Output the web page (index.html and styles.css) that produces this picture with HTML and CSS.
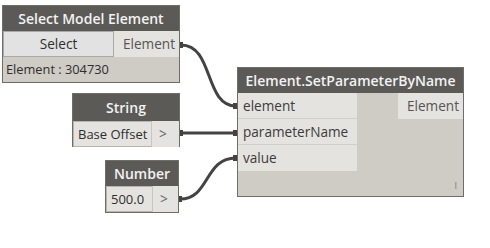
FILE: index.html
```html
<!DOCTYPE html>
<html lang="en">
<head>
    <meta charset="UTF-8">
    <title>Dynamo Graph</title>
    <link rel="stylesheet" href="styles.css">
</head>
<body>

    <div class="canvas">
        <!-- Wires -->
        <svg class="wires" width="490" height="248" viewBox="0 0 490 248">
            <path d="M181,45 C214,45 204,106 236,106" />
            <path d="M181,133 L236,133" />
            <path d="M180,199 C210,199 204,158 236,158" />
            <g class="nubs">
                <rect x="179" y="42" width="4" height="6" />
                <rect x="179" y="130" width="4" height="6" />
                <rect x="178" y="196" width="4" height="6" />
                <rect x="233" y="103" width="4" height="6" />
                <rect x="233" y="130" width="4" height="6" />
                <rect x="233" y="155" width="4" height="6" />
            </g>
        </svg>

        <!-- Select Model Element -->
        <div class="node node-select">
            <div class="node-header">Select Model Element</div>
            <div class="node-row">
                <div class="select-btn">Select</div>
                <div class="port port-out">Element</div>
            </div>
            <div class="node-info">Element : 304730</div>
        </div>

        <!-- String -->
        <div class="node node-string">
            <div class="node-header">String</div>
            <div class="node-row">
                <div class="value-box">Base Offset</div>
                <div class="port port-arrow">&gt;</div>
            </div>
        </div>

        <!-- Number -->
        <div class="node node-number">
            <div class="node-header">Number</div>
            <div class="node-row">
                <div class="value-box">500.0</div>
                <div class="port port-arrow">&gt;</div>
            </div>
        </div>

        <!-- Element.SetParameterByName -->
        <div class="node node-set">
            <div class="node-header">Element.SetParameterByName</div>
            <div class="node-body">
                <div class="inputs">
                    <div class="port port-in">element</div>
                    <div class="port port-in">parameterName</div>
                    <div class="port port-in">value</div>
                </div>
                <div class="outputs">
                    <div class="port port-out">Element</div>
                </div>
            </div>
            <div class="lacing">I</div>
        </div>
    </div>

</body>
</html>
```

FILE: styles.css
```css
body {
    margin: 0;
    background-color: #ffffff;
    font-family: "Open Sans", "Noto Sans", sans-serif;
    color: #3c3c3c;
}

.canvas {
    position: relative;
    width: 490px;
    height: 248px;
    overflow: hidden;
}

.wires {
    position: absolute;
    left: 0;
    top: 0;
}

.wires path {
    fill: none;
    stroke: #434343;
    stroke-width: 3;
}

.wires .nubs rect {
    fill: #434343;
}

.node {
    position: absolute;
    background-color: #cfcbc5;
    border: 1px solid #6e6d6a;
    box-sizing: border-box;
    display: flex;
    flex-direction: column;
}

.node-header {
    background-color: #5b5a57;
    color: #f2f2f2;
    font-size: 14px;
    font-weight: 600;
    text-align: center;
    height: 25px;
    line-height: 25px;
    white-space: nowrap;
}

.node-row {
    display: flex;
    height: 26px;
}

.port {
    font-size: 13.6px;
    line-height: 25px;
    height: 26px;
    box-sizing: border-box;
    background-color: #e5e3df;
    white-space: nowrap;
}

.port-out {
    color: #555;
    padding: 0 4px;
    text-align: right;
}

.port-arrow {
    color: #666;
    padding-left: 7px;
    flex: 1;
    border-left: 1px solid #c9c6c1;
}

.value-box {
    font-size: 13px;
    line-height: 24px;
    background-color: #e5e3df;
    padding: 0 4px;
    border: 1px solid #b8b5b0;
    border-right: none;
    box-sizing: border-box;
    color: #2e2e2e;
    white-space: nowrap;
}

/* Select Model Element */
.node-select {
    left: 2px;
    top: 5px;
    width: 178px;
    height: 78px;
}

.select-btn {
    width: 111px;
    background-color: #e2e2e2;
    border: 1px solid #a9a9a9;
    box-sizing: border-box;
    font-size: 13.6px;
    line-height: 24px;
    text-align: center;
    color: #2e2e2e;
}

.node-select .port-out {
    flex: 1;
}

.node-info {
    font-size: 12.8px;
    line-height: 24px;
    padding-left: 3px;
    color: #2e2e2e;
    white-space: nowrap;
}

/* String */
.node-string {
    left: 72px;
    top: 93px;
    width: 108px;
    height: 54px;
}

.node-string .node-header {
    height: 27px;
    line-height: 27px;
}

.node-string .value-box {
    width: 78px;
}

/* Number */
.node-number {
    left: 105px;
    top: 160px;
    width: 74px;
    height: 53px;
}

.node-number .value-box {
    width: 46px;
}

/* Element.SetParameterByName */
.node-set {
    left: 237px;
    top: 67px;
    width: 227px;
    height: 130px;
}

.node-body {
    display: flex;
    justify-content: space-between;
}

.inputs {
    display: flex;
    flex-direction: column;
    width: 119px;
}

.port-in {
    padding-left: 5px;
    border-bottom: 1px solid #d2cfca;
}

.port-in:last-child {
    border-bottom: none;
}

.outputs .port-out {
    width: 65px;
}

.lacing {
    position: absolute;
    right: 6px;
    bottom: 4px;
    font-size: 9px;
    color: #777;
}
```
